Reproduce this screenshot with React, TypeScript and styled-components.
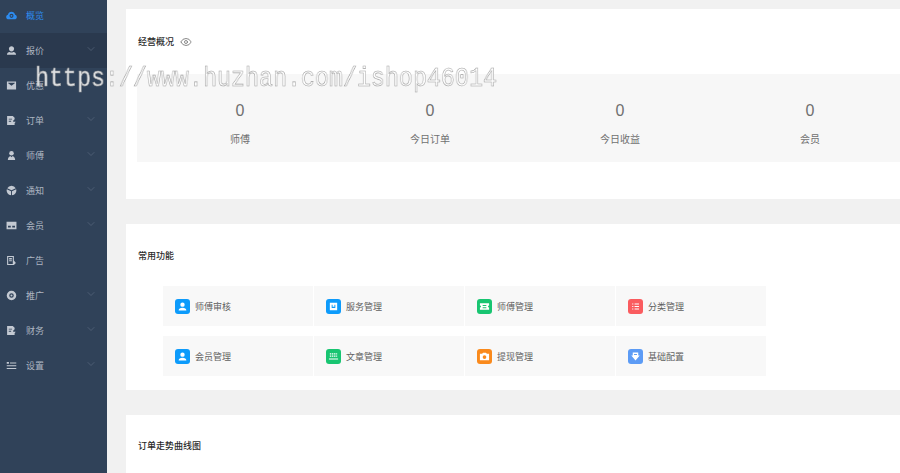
import React from "react";
import styled, { createGlobalStyle } from "styled-components";
import { ChevronDown, Eye } from "lucide-react";

const Global = createGlobalStyle`
  html, body { margin: 0; padding: 0; height: 100%; overflow: hidden; background: #f1f1f1; }
  * { box-sizing: border-box; }
`;

const Page = styled.div`
  position: relative;
  display: flex;
  width: 900px;
  height: 473px;
  overflow: hidden;
  font-family: "Noto Sans CJK SC", "Liberation Sans", sans-serif;
`;

const Sidebar = styled.nav`
  flex: 0 0 107px;
  height: 100%;
  background: #304259;
  overflow: hidden;
`;

const Menu = styled.ul`
  list-style: none;
  margin: -2px 0 0;
  padding: 0;
`;

const Item = styled.li<{ $state?: "active" | "open" }>`
  display: flex;
  align-items: center;
  height: 35px;
  padding: 0 10px 0 6px;
  font-size: 9px;
  color: ${(p) => (p.$state === "active" ? "#2d8cf0" : "#aeb6c2")};
  background: ${(p) => (p.$state === "open" ? "#2a394e" : "transparent")};
  svg.menu-icon { flex: 0 0 11px; width: 11px; height: 11px; margin-right: 9px; color: ${(p) => (p.$state === "active" ? "#2d8cf0" : "#c3c9d2")}; }
`;

const ItemLabel = styled.span`
  flex: 1;
`;

const Arrow = styled(ChevronDown).attrs({ strokeWidth: 1.2 })`
  width: 12px;
  height: 12px;
  color: #5f6f85;
  margin-top: -3px;
`;

const Main = styled.main`
  flex: 1;
  min-width: 0;
  display: flex;
  flex-direction: column;
  gap: 25px;
  padding: 9px 0 0 19px;
  background: #f1f1f1;
`;

const Card = styled.section<{ $height: number }>`
  flex: 0 0 ${(p) => p.$height}px;
  background: #fff;
  padding-left: 12px;
  overflow: hidden;
`;

const Title = styled.h2<{ $top: number }>`
  display: flex;
  align-items: center;
  gap: 6px;
  margin: 0;
  padding-top: ${(p) => p.$top}px;
  height: ${(p) => p.$top + 13}px;
  font-size: 9px;
  line-height: 13px;
  font-weight: 500;
  color: #2b2b2b;
`;

const EyeIcon = styled(Eye)`
  width: 12px;
  height: 12px;
  color: #8a8a8a;
`;

const Stats = styled.div`
  display: grid;
  grid-template-columns: repeat(4, 190px);
  height: 88px;
  margin: 26px 0 0 -1px;
  padding-left: 8px;
  background: #f7f7f7;
`;

const Stat = styled.div`
  display: flex;
  flex-direction: column;
  align-items: center;
  padding-top: 27px;
  color: #707070;
`;

const StatValue = styled.div`
  font-family: "Liberation Sans", sans-serif;
  font-size: 16px;
  line-height: 20px;
`;

const StatLabel = styled.div`
  margin-top: 11px;
  font-size: 10px;
  line-height: 14px;
`;

const Shortcuts = styled.div`
  display: grid;
  grid-template-columns: repeat(4, 150px);
  grid-auto-rows: 40px;
  column-gap: 1px;
  row-gap: 10px;
  margin: 24px 0 0 25px;
`;

const Shortcut = styled.a`
  display: flex;
  align-items: center;
  gap: 5px;
  padding-left: 12px;
  background: #f8f8f8;
  font-size: 9px;
  color: #606060;
`;

const Badge = styled.span<{ $color: string }>`
  display: flex;
  align-items: center;
  justify-content: center;
  width: 15px;
  height: 15px;
  border-radius: 3px;
  background: ${(p) => p.$color};
  svg { width: 11px; height: 11px; color: #fff; }
`;

const Watermark = styled.div`
  position: absolute;
  left: 35px;
  top: 61px;
  font-family: "Liberation Mono", monospace;
  font-size: 28px;
  line-height: 36px;
  white-space: nowrap;
  color: rgba(255, 255, 255, 0.85);
  -webkit-text-stroke: 0.6px #a0a0a0;
  transform: scaleX(0.833);
  transform-origin: left top;
  will-change: transform;
  pointer-events: none;
`;

type IconProps = { className?: string };
const Svg: React.FC<React.PropsWithChildren<IconProps>> = ({ className, children }) => (
  <svg className={className} viewBox="0 0 12 12" fill="currentColor">{children}</svg>
);

const icons: Record<string, React.FC<IconProps>> = {
  cloud: (p) => (
    <Svg {...p}><path fillRule="evenodd" d="M3 10.2C1.2 10.2.2 9 .2 7.6c0-1.2.8-2.2 1.9-2.5C2.5 3 4.1 1.8 6 1.8s3.5 1.2 3.9 3.3c1.1.3 1.9 1.3 1.9 2.5 0 1.4-1 2.6-2.8 2.6H3zM6 4.2a2.2 2.2 0 1 0 0 4.4 2.2 2.2 0 0 0 0-4.4z" /><circle cx="6" cy="6.4" r="1" /></Svg>
  ),
  hat: (p) => (
    <Svg {...p}><path d="M3.2 4.2C3.2 2.4 4.4 1.4 6 1.4s2.8 1 2.8 2.8c0 1.6-1.2 2.9-2.8 2.9S3.2 5.8 3.2 4.2z" /><path d="M1 10.6c0-1.6 1.4-2.7 3-2.9.6.4 1.3.6 2 .6s1.4-.2 2-.6c1.6.2 3 1.3 3 2.9H1z" /></Svg>
  ),
  mail: (p) => (
    <Svg {...p}><path fillRule="evenodd" d="M1 1.6h10v8.8H1V1.6zm1.4 2L6 6.4l3.6-2.8v-.5H2.4v.5z" /></Svg>
  ),
  doc: (p) => (
    <Svg {...p}><path fillRule="evenodd" d="M1.2 1h6.2L9.4 3v1.6l-1.6 1.6v1.2l2.8-.1L9.4 9v2H1.2V1zM3 4v1h3.6V4H3zm0 2.4v1h2.6v-1H3z" /></Svg>
  ),
  person: (p) => (
    <Svg {...p}><circle cx="6" cy="3.6" r="2.5" /><path d="M2 11c0-2.4 1.6-4 2.8-4.4L6 8l1.2-1.4C8.4 7 10 8.6 10 11H2z" /></Svg>
  ),
  cube: (p) => (
    <Svg {...p}><path d="M6 .8a5.2 5.2 0 0 1 4.6 2.8L6 5.8 1.4 3.6A5.2 5.2 0 0 1 6 .8z" /><path d="M.9 4.6l4.6 2.2v4.4A5.2 5.2 0 0 1 .9 4.6zM11.1 4.6a5.2 5.2 0 0 1-4.6 6.6V6.8l4.6-2.2z" /></Svg>
  ),
  card: (p) => (
    <Svg {...p}><path fillRule="evenodd" d="M.6 2h10.8v8H.6V2zm1.6 4.4v1.8h3V6.4h-3zm4.6 0v1.8h3V6.4h-3z" /></Svg>
  ),
  ad: (p) => (
    <Svg {...p}><path fillRule="evenodd" d="M1.2 1h7.4v5l2.2 2.6L8.6 11H1.2V1zm1.2 1.2v7.6h5V2.2h-5zM3.4 3.4h3v1.4h-3V3.4zm0 2.4h3v1h-3v-1z" /></Svg>
  ),
  ring: (p) => (
    <Svg {...p}><path fillRule="evenodd" d="M6 .8a5.2 5.2 0 1 1 0 10.4A5.2 5.2 0 0 1 6 .8zm0 2.7a2.5 2.5 0 1 0 0 5 2.5 2.5 0 0 0 0-5z" /><circle cx="6" cy="6" r="1.1" /></Svg>
  ),
  list: (p) => (
    <Svg {...p}><path d="M.8 2.2h2.4v2H.8zM4.4 2.6h6.8v1.2H4.4zM.8 5.6h10.4v1.2H.8zM.8 8.6h10.4v1.2H.8z" /></Svg>
  ),
};

const menu: { label: string; icon: string; arrow?: boolean; state?: "active" | "open" }[] = [
  { label: "概览", icon: "cloud", state: "active" },
  { label: "报价", icon: "hat", arrow: true, state: "open" },
  { label: "优惠", icon: "mail" },
  { label: "订单", icon: "doc", arrow: true },
  { label: "师傅", icon: "person", arrow: true },
  { label: "通知", icon: "cube", arrow: true },
  { label: "会员", icon: "card", arrow: true },
  { label: "广告", icon: "ad" },
  { label: "推广", icon: "ring", arrow: true },
  { label: "财务", icon: "doc", arrow: true },
  { label: "设置", icon: "list", arrow: true },
];

const stats = [
  { value: 0, label: "师傅" },
  { value: 0, label: "今日订单" },
  { value: 0, label: "今日收益" },
  { value: 0, label: "会员" },
];

const glyphs: Record<string, React.ReactNode> = {
  user: <path d="M3.6 4a2.4 2.4 0 1 1 4.8 0 2.4 2.4 0 0 1-4.8 0zM1.8 10.4c0-1.8 1.8-3 4.2-3s4.2 1.2 4.2 3H1.8z" />,
  box: <path fillRule="evenodd" d="M2 2h8v8H2V2zm2 2v3.6h4V4H7v2.4H5V4H4z" />,
  ticket: <path fillRule="evenodd" d="M1 2.4h10v2.4a1.2 1.2 0 0 0 0 2.4v2.4H1V7.2a1.2 1.2 0 0 0 0-2.4V2.4zm3 2v1h4v-1H4zm0 2.4v1h4v-1H4z" />,
  lines: <path d="M2.4 2.6h1.2v1.2H2.4zM5 2.6h4.8v1.2H5zM2.4 5.4h1.2v1.2H2.4zM5 5.4h4.8v1.2H5zM2.4 8.2h1.2v1.2H2.4zM5 8.2h4.8v1.2H5z" />,
  keys: <path d="M2 2.4h1.6v1.4H2zM4.3 2.4h1.6v1.4H4.3zM6.6 2.4h1.6v1.4H6.6zM8.9 2.4h1.1v1.4H8.9zM2 5h1.6v1.4H2zM4.3 5h1.6v1.4H4.3zM6.6 5h1.6v1.4H6.6zM8.9 5h1.1v1.4H8.9zM1 8.2h10v1.2H1z" />,
  camera: <path fillRule="evenodd" d="M1 3h2.4L4.4 1.8h3.2L8.6 3H11v7.2H1V3zm5 1.6a2 2 0 1 0 0 4 2 2 0 0 0 0-4z" />,
  shield: <path fillRule="evenodd" d="M3 1.6h6v3.2h1.6L6 10.4 1.4 4.8H3V1.6zm1.4 1.6v1.2h3.2V3.2H4.4z" />,
};

const shortcuts = [
  { label: "师傅审核", color: "#0d9bfb", glyph: "user" },
  { label: "服务管理", color: "#0d9bfb", glyph: "box" },
  { label: "师傅管理", color: "#18c571", glyph: "ticket" },
  { label: "分类管理", color: "#fa5c5f", glyph: "lines" },
  { label: "会员管理", color: "#0d9bfb", glyph: "user" },
  { label: "文章管理", color: "#18c571", glyph: "keys" },
  { label: "提现管理", color: "#fa8a1c", glyph: "camera" },
  { label: "基础配置", color: "#5c9bf5", glyph: "shield" },
];

export default function App() {
  return (
    <Page>
      <Global />
      <Sidebar>
        <Menu>
          {menu.map((m) => {
            const Icon = icons[m.icon];
            return (
              <Item key={m.label} $state={m.state}>
                <Icon className="menu-icon" />
                <ItemLabel>{m.label}</ItemLabel>
                {m.arrow && <Arrow />}
              </Item>
            );
          })}
        </Menu>
      </Sidebar>
      <Main>
        <Card $height={190}>
          <Title $top={26}>
            经营概况
            <EyeIcon />
          </Title>
          <Stats>
            {stats.map((s) => (
              <Stat key={s.label}>
                <StatValue>{s.value}</StatValue>
                <StatLabel>{s.label}</StatLabel>
              </Stat>
            ))}
          </Stats>
        </Card>
        <Card $height={166}>
          <Title $top={25}>常用功能</Title>
          <Shortcuts>
            {shortcuts.map((s) => (
              <Shortcut key={s.label}>
                <Badge $color={s.color}>
                  <svg viewBox="0 0 12 12" fill="currentColor">{glyphs[s.glyph]}</svg>
                </Badge>
                {s.label}
              </Shortcut>
            ))}
          </Shortcuts>
        </Card>
        <Card $height={58}>
          <Title $top={24}>订单走势曲线图</Title>
        </Card>
      </Main>
      <Watermark>https://www.huzhan.com/ishop46014</Watermark>
    </Page>
  );
}
